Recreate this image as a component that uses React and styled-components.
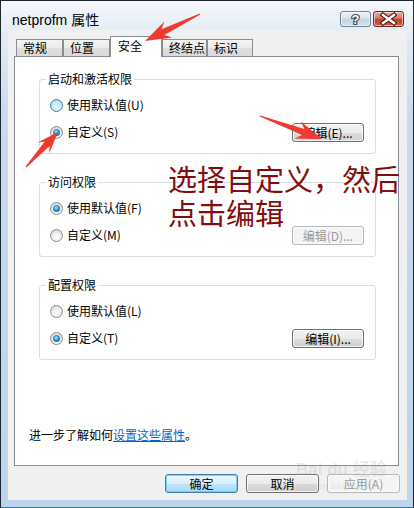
import React from "react";
import styled, { createGlobalStyle } from "styled-components";

const UI_FONT = `"Noto Sans CJK SC", "Noto Sans", sans-serif`;

const GlobalStyle = createGlobalStyle`
  html, body { margin: 0; padding: 0; background: #ffffff; }
  body { font-family: ${UI_FONT}; }
  * { box-sizing: border-box; }
`;

const Window = styled.div`
  position: relative;
  width: 414px;
  height: 508px;
  border: 1px solid #1b2733;
  border-bottom-color: #1f7f97;
  background: linear-gradient(to bottom, #f6f8fb 0px, #e4ecf5 30px, #c9dbee 110px, #bdd4ec 100%);
  display: flex;
  flex-direction: column;
  overflow: hidden;
`;

const TitleBar = styled.div`
  flex: 0 0 29px;
  display: flex;
  align-items: flex-start;
  padding: 10px 9px 0 11px;
`;

const Title = styled.div`
  flex: 1;
  font: 14px/18px "Liberation Sans", "Noto Sans CJK SC", sans-serif;
  color: #000;
`;

const CaptionButtons = styled.div`
  display: flex;
  gap: 2px;
`;

const CaptionButton = styled.div`
  width: 31px;
  height: 16px;
  border-radius: 3px;
  border: 1px solid ${(p) => (p.$close ? "#6b2a22" : "#6f8296")};
  background: ${(p) =>
    p.$close
      ? "linear-gradient(to bottom, #e8a597 0%, #d7786a 45%, #c1402f 50%, #cc5a46 100%)"
      : "linear-gradient(to bottom, #eef3f8 0%, #dbe4ee 45%, #c6d3e2 50%, #d3dfec 100%)"};
  box-shadow: inset 0 0 0 1px rgba(255, 255, 255, 0.55);
  display: flex;
  align-items: center;
  justify-content: center;
`;

const Body = styled.div`
  flex: 1;
  display: flex;
  padding: 0 6px 7px 7px;
`;

const Client = styled.div`
  flex: 1;
  background: #f0f0f0;
  display: flex;
  flex-direction: column;
  padding: 6px 7px 7px 6px;
`;

const TabRow = styled.div`
  height: 20px;
  display: flex;
  align-items: flex-end;
  padding-left: 2px;
  position: relative;
  z-index: 2;
`;

const Tab = styled.div`
  width: ${(p) => p.$w}px;
  height: ${(p) => (p.$active ? 21 : 17)}px;
  margin-bottom: ${(p) => (p.$active ? -1 : 0)}px;
  border: 1px solid #898c95;
  border-bottom: none;
  background: ${(p) =>
    p.$active ? "#ffffff" : "linear-gradient(to bottom, #f3f3f3 0%, #ebebeb 50%, #dedede 51%, #dadada 100%)"};
  font-size: 12px;
  line-height: ${(p) => (p.$active ? 18 : 16)}px;
  padding-left: ${(p) => (p.$active ? 7 : 6)}px;
  color: #000;
  white-space: nowrap;
`;

const Panel = styled.div`
  flex: 1;
  margin-right: 1px;
  background: #ffffff;
  border: 1px solid #898c95;
  display: flex;
  flex-direction: column;
  padding: 15px 0 22px 14px;
  position: relative;
  z-index: 1;
`;

const Group = styled.fieldset`
  width: 337px;
  margin: 0 0 21px 10px;
  padding: 9px 11px 11px 10px;
  border: 1px solid #d5dfe5;
  border-radius: 3px;
  min-width: 0;
`;

const Legend = styled.legend`
  font-size: 12px;
  line-height: 14px;
  padding: 0 2px;
  margin-left: -4px;
  color: #000;
`;

const Rows = styled.div`
  display: flex;
  flex-direction: column;
  gap: 7px;
`;

const Row = styled.div`
  height: 20px;
  display: flex;
  align-items: center;
  justify-content: space-between;
`;

const RadioLabel = styled.label`
  display: flex;
  align-items: center;
  gap: 4px;
  font-size: 12px;
  line-height: 16px;
  color: #000;
`;

const Radio = styled.span`
  position: relative;
  flex: 0 0 13px;
  width: 13px;
  height: 13px;
  border-radius: 50%;
  border: 1px solid ${(p) => (p.$hover ? "#3c7fb1" : "#8a8c8e")};
  background: ${(p) =>
    p.$hover
      ? "radial-gradient(circle at 50% 65%, #f2fafe 0%, #cdeafb 45%, #98cdef 100%)"
      : "radial-gradient(circle at 50% 65%, #ffffff 0%, #ececec 50%, #cacaca 100%)"};
  &::after {
    content: "";
    display: ${(p) => (p.$checked ? "block" : "none")};
    position: absolute;
    left: 2px;
    top: 2px;
    width: 7px;
    height: 7px;
    border-radius: 50%;
    background: radial-gradient(circle at 45% 40%, #a6e3ff 0%, #2b92d8 45%, #0b477c 100%);
  }
`;

const Btn = styled.button`
  width: ${(p) => p.$w}px;
  height: 19px;
  padding: 0;
  margin: 0;
  font: 12px/17px ${UI_FONT};
  border-radius: 3px;
  color: ${(p) => (p.disabled ? "#9a9a9a" : "#000")};
  border: 1px solid ${(p) => (p.disabled ? "#b4b8bc" : p.$default ? "#3c7fb1" : "#707070")};
  background: ${(p) =>
    p.disabled
      ? "#f4f4f4"
      : p.$default
      ? "linear-gradient(to bottom, #eaf6fd 0%, #d9f0fc 50%, #bee6fd 51%, #a7d9f5 100%)"
      : "linear-gradient(to bottom, #f2f2f2 0%, #ebebeb 50%, #dddddd 51%, #cfcfcf 100%)"};
  box-shadow: inset 0 0 0 1px
    ${(p) => (p.disabled ? "rgba(255,255,255,0.6)" : p.$default ? "rgba(110,200,245,0.85)" : "rgba(255,255,255,0.75)")};
  white-space: nowrap;
`;

const Footer = styled.div`
  margin-top: auto;
  font-size: 12px;
  line-height: 16px;
  color: #000;
`;

const Link = styled.a`
  color: #0066cc;
  text-decoration: underline;
`;

const ButtonRow = styled.div`
  height: 19px;
  margin-top: 8px;
  display: flex;
  justify-content: flex-end;
  gap: 8px;
`;

const Overlay = styled.svg`
  position: absolute;
  left: -1px;
  top: -1px;
  pointer-events: none;
  z-index: 5;
`;

const Annotation = styled.div`
  position: absolute;
  left: 167px;
  top: 160px;
  font: 29px/34px "Noto Sans CJK SC", sans-serif;
  color: #840c0c;
  white-space: nowrap;
  pointer-events: none;
  z-index: 5;
`;

const Watermark = styled.div`
  position: absolute;
  left: 295px;
  top: 459px;
  color: rgba(150, 150, 150, 0.2);
  font: bold 17px/20px "Liberation Sans", "Noto Sans CJK SC", sans-serif;
  pointer-events: none;
  z-index: 4;
  white-space: nowrap;
`;

const WatermarkSmall = styled.div`
  font: 9px/12px "Liberation Sans", sans-serif;
  letter-spacing: 0.5px;
`;

function arrowPoints(x1, y1, x2, y2, head = 24, wing = 9, neck = 3.2, tail = 0.6) {
  const dx = x2 - x1;
  const dy = y2 - y1;
  const len = Math.hypot(dx, dy);
  const ux = dx / len;
  const uy = dy / len;
  const nx = -uy;
  const ny = ux;
  const bx = x2 - ux * head;
  const by = y2 - uy * head;
  const kx = x2 - ux * (head - 6);
  const ky = y2 - uy * (head - 6);
  const pts = [
    [x1 + nx * tail, y1 + ny * tail],
    [kx + nx * neck, ky + ny * neck],
    [bx + nx * wing, by + ny * wing],
    [x2, y2],
    [bx - nx * wing, by - ny * wing],
    [kx - nx * neck, ky - ny * neck],
    [x1 - nx * tail, y1 - ny * tail],
  ];
  return pts.map((p) => p.map((v) => v.toFixed(1)).join(",")).join(" ");
}

const ARROWS = [
  { x1: 200, y1: 14, x2: 145, y2: 41, head: 26, wing: 9 },
  { x1: 26, y1: 167, x2: 58, y2: 132, head: 22, wing: 8 },
  { x1: 260, y1: 116, x2: 322, y2: 139, head: 26, wing: 9 },
];

const TABS = [
  { label: "常规", w: 47 },
  { label: "位置", w: 47 },
  { label: "安全", w: 52, active: true },
  { label: "终结点", w: 45 },
  { label: "标识", w: 46 },
];

const GROUPS = [
  {
    title: "启动和激活权限",
    opts: [
      { label: "使用默认值(U)", hover: true },
      { label: "自定义(S)", checked: true },
    ],
    btn: "编辑(E)...",
    disabled: false,
  },
  {
    title: "访问权限",
    opts: [
      { label: "使用默认值(F)", checked: true },
      { label: "自定义(M)" },
    ],
    btn: "编辑(D)...",
    disabled: true,
  },
  {
    title: "配置权限",
    opts: [
      { label: "使用默认值(L)" },
      { label: "自定义(T)", checked: true },
    ],
    btn: "编辑(I)...",
    disabled: false,
  },
];

export default function App() {
  return (
    <>
      <GlobalStyle />
      <Window>
        <TitleBar>
          <Title>netprofm 属性</Title>
          <CaptionButtons>
            <CaptionButton>
              <svg width="29" height="14" viewBox="0 0 29 14">
                <text
                  x="14.5"
                  y="12"
                  textAnchor="middle"
                  fontSize="13"
                  fontWeight="bold"
                  fontFamily="Liberation Sans, sans-serif"
                  fill="#ffffff"
                  stroke="#3d4b5c"
                  strokeWidth="2.2"
                  paintOrder="stroke"
                >
                  ?
                </text>
              </svg>
            </CaptionButton>
            <CaptionButton $close>
              <svg width="29" height="14" viewBox="0 0 29 14">
                <path d="M9 3 L20 11 M20 3 L9 11" stroke="#4a1810" strokeWidth="4.6" strokeLinecap="square" />
                <path d="M9 3 L20 11 M20 3 L9 11" stroke="#ffffff" strokeWidth="2.4" strokeLinecap="square" />
              </svg>
            </CaptionButton>
          </CaptionButtons>
        </TitleBar>
        <Body>
          <Client>
            <TabRow>
              {TABS.map((t) => (
                <Tab key={t.label} $w={t.w} $active={t.active}>
                  {t.label}
                </Tab>
              ))}
            </TabRow>
            <Panel>
              {GROUPS.map((g) => (
                <Group key={g.title}>
                  <Legend>{g.title}</Legend>
                  <Rows>
                    <Row>
                      <RadioLabel>
                        <Radio $checked={g.opts[0].checked} $hover={g.opts[0].hover} />
                        {g.opts[0].label}
                      </RadioLabel>
                    </Row>
                    <Row>
                      <RadioLabel>
                        <Radio $checked={g.opts[1].checked} $hover={g.opts[1].hover} />
                        {g.opts[1].label}
                      </RadioLabel>
                      <Btn $w={72} disabled={g.disabled}>
                        {g.btn}
                      </Btn>
                    </Row>
                  </Rows>
                </Group>
              ))}
              <Footer>
                进一步了解如何<Link>设置这些属性</Link>。
              </Footer>
            </Panel>
            <ButtonRow>
              <Btn $w={73} $default>
                确定
              </Btn>
              <Btn $w={73}>取消</Btn>
              <Btn $w={73} disabled>
                应用(A)
              </Btn>
            </ButtonRow>
          </Client>
        </Body>

        <Watermark>
          Bai du 经验
          <WatermarkSmall>jingyan.baidu.com</WatermarkSmall>
        </Watermark>

        <Annotation>
          选择自定义，然后
          <br />
          点击编辑
        </Annotation>

        <Overlay width="414" height="508" viewBox="0 0 414 508">
          {ARROWS.map((a, i) => (
            <polygon key={i} points={arrowPoints(a.x1, a.y1, a.x2, a.y2, a.head, a.wing)} fill="#ee3a2f" />
          ))}
        </Overlay>
      </Window>
    </>
  );
}
